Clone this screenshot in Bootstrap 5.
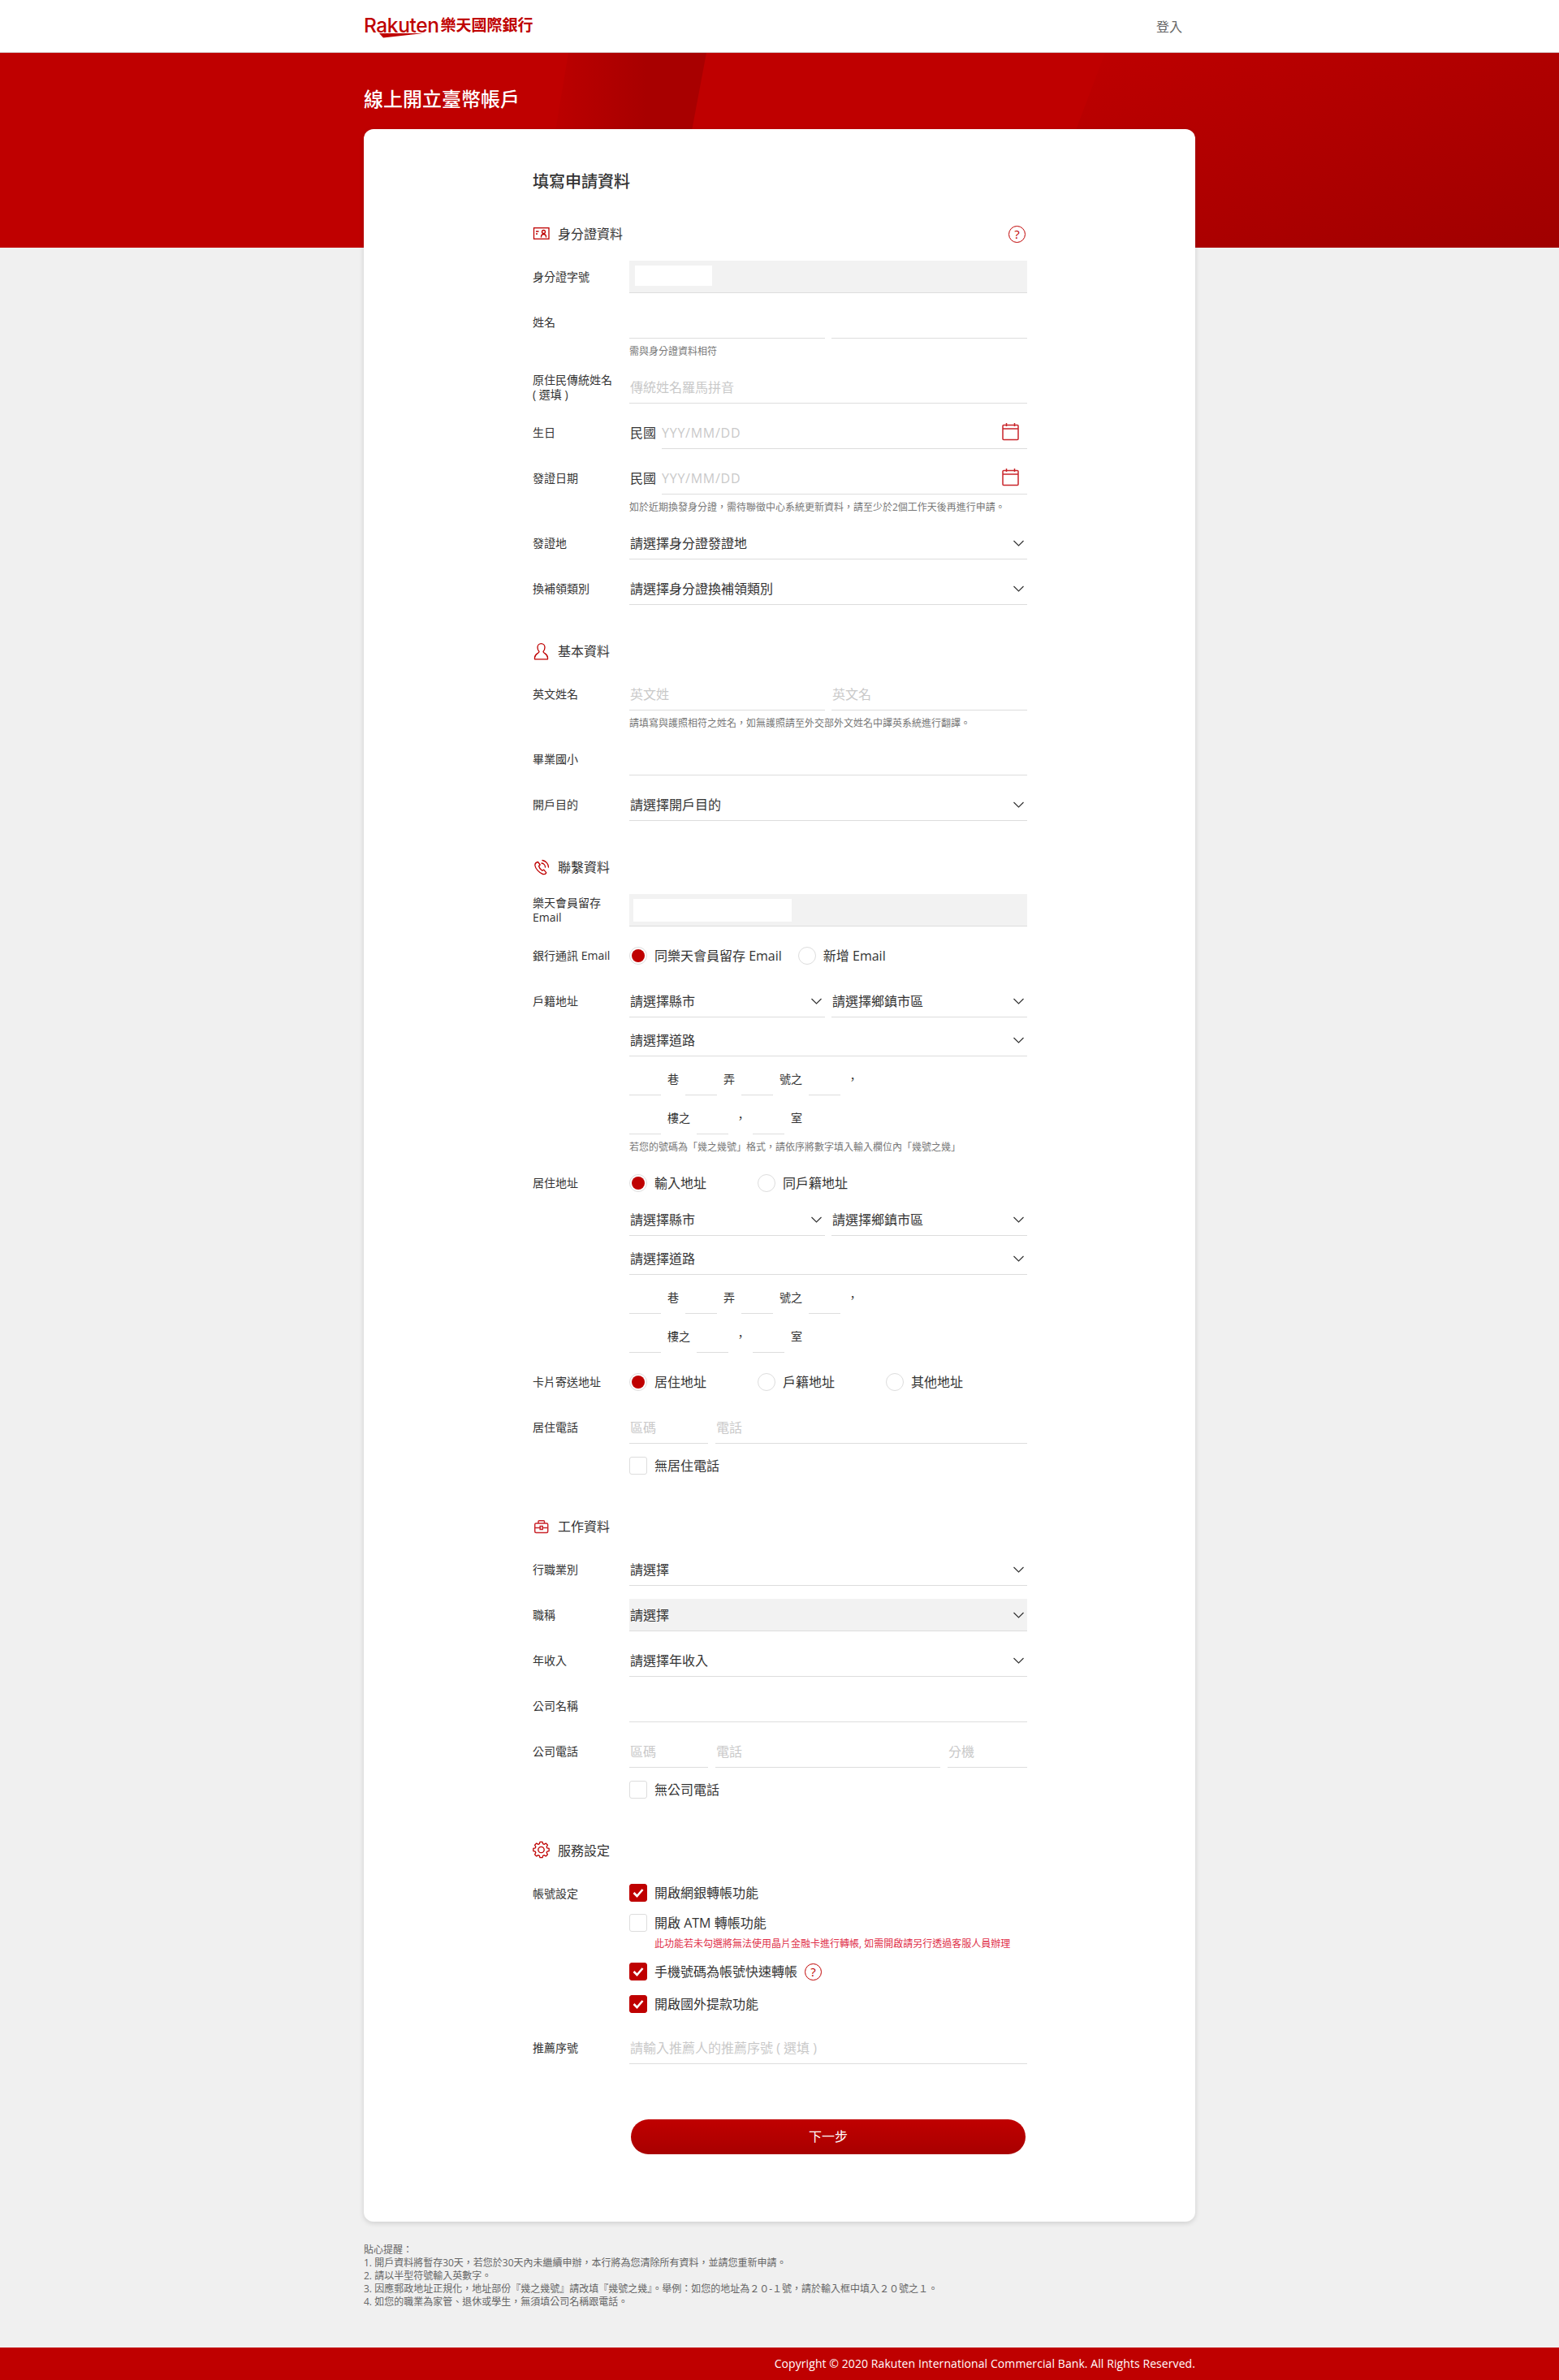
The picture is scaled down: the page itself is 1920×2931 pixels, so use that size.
<!DOCTYPE html>
<html lang="zh-Hant">
<head>
<meta charset="utf-8">
<title>線上開立臺幣帳戶</title>
<link href="https://cdn.jsdelivr.net/npm/bootstrap@5.3.0/dist/css/bootstrap.min.css" rel="stylesheet">
<style>
body{background:#f0f0f0;color:#333;font-family:"Open Sans","Noto Sans CJK TC",sans-serif;font-size:14px;line-height:18px;}
.top-bar{height:65px;background:#fff;border-bottom:1px solid #ddd;padding:0;}
.shell{width:1024px;}
.brand-name{font-family:Inter,sans-serif;font-size:24.5px;font-weight:500;letter-spacing:-.4px;color:#bf0000;line-height:24px;}
.brand-cjk{font-size:19px;font-weight:700;color:#bf0000;line-height:24px;margin-left:2px;}
.brand-wrap{position:relative;padding:0;margin:-2px 0 0;}
.brand-swoosh{position:absolute;left:19px;top:22px;}
.login-link{color:#666;font-size:16px;margin-right:16px;text-decoration:none;margin-top:1px;}
.hero{height:240px;background:#bf0000;overflow:hidden;}
.hero-art{position:absolute;inset:0;width:100%;height:100%;}
.hero-title{font-size:24px;line-height:30px;font-weight:500;color:#fff;padding-top:42px;margin:0;}
.sheet{margin-top:-146px;border-radius:12px;border:0;box-shadow:0 2px 6px rgba(0,0,0,.14);padding:50px 0 83px;}
.form-wrap{width:609px;margin-left:208px;}
.form-title{font-size:20px;line-height:30px;font-weight:500;color:#333;margin:0 0 37px;}
.sec-head{height:24px;margin:45px 0 21px;font-size:16px;line-height:24px;font-weight:400;color:#333;}
.sec-first{margin-top:0;}
.sec-head svg{margin-right:10px;flex:none;}
.frow{display:flex;margin-bottom:16px;}
.flabel{width:119px;flex:none;height:40px;display:flex;align-items:center;font-size:14px;line-height:18px;color:#333;}
.fbody{flex:1 1 auto;min-width:0;}
.form-control.line-in,.form-select.line-in{height:40px;min-height:40px;border:0;border-bottom:1px solid #ddd;border-radius:0;padding:0 0 0 1px;font-size:16px;line-height:24px;color:#333;background-color:transparent;box-shadow:none;}
.form-control.line-in::placeholder{color:#c9c9c9;opacity:1;}
.form-control.date-in::placeholder{letter-spacing:.75px;}
.form-select.line-in{padding-right:28px;background-image:url("data:image/svg+xml,%3csvg xmlns='http://www.w3.org/2000/svg' viewBox='0 0 13 8'%3e%3cpath fill='none' stroke='%23333' stroke-width='1.2' d='M.5 1l6 6 6-6'/%3e%3c/svg%3e");background-position:right 4px center;background-size:13px 8px;}
.form-select.line-in:disabled{background-color:#f2f2f2;color:#333;opacity:1;}
.ro-box{height:40px;background:#f2f2f2;border-bottom:1px solid #ddd;padding-top:6px;}
.mask-a{display:block;width:95px;height:25px;margin-left:7px;background:#fff;}
.mask-b{display:block;width:195px;height:28px;margin-left:5px;background:#fff;}
.help-text{font-size:12px;line-height:16px;color:#777;margin-top:8px;}
.warn-text{font-size:12px;line-height:16px;color:#e0304a;margin:7px 0 15px 31px;}
.pair{display:flex;gap:8px;}
.pair>*{flex:1 1 0;min-width:0;}
.tel-row{display:flex;gap:9px;}
.tel-a{width:97px;flex:none;}
.tel-x{width:98px;flex:none;}
.stack-gap{margin-top:8px;}
.live-sel{margin-top:5px;}
.addr-row{display:flex;gap:8px;align-items:center;height:40px;font-size:14px;}
.form-control.addr-in{width:39px;flex:none;}
.date-prefix{width:40px;flex:none;font-size:16px;padding-left:1px;}
.date-field{flex:1 1 auto;border-bottom:1px solid #ddd;height:40px;}
.form-control.line-in.date-in{border-bottom:0;padding-left:0;}
.date-field svg{flex:none;margin:7px 10px 0 0;}
.choice-row{display:flex;align-items:center;height:40px;font-size:16px;}
.choice{display:flex;align-items:center;gap:9px;margin:0;min-height:22px;padding:0;font-size:16px;line-height:22px;color:#333;}
.choice-col{width:158px;flex:none;}
.choice-free{margin-right:20px;}
.choice .form-check-input{width:22px;height:22px;margin:0;float:none;flex:none;border:1px solid #ddd;box-shadow:none;}
.choice .form-check-input[type=radio]:checked{background-color:#fff;border-color:#ddd;background-image:url("data:image/svg+xml,%3csvg xmlns='http://www.w3.org/2000/svg' viewBox='0 0 22 22'%3e%3ccircle cx='11' cy='11' r='8' fill='%23bf0000'/%3e%3c/svg%3e");background-size:22px 22px;}
.choice .form-check-input[type=checkbox]{border-radius:3px;}
.choice .form-check-input[type=checkbox]:checked{background-color:#bf0000;border-color:#bf0000;background-image:url("data:image/svg+xml,%3csvg xmlns='http://www.w3.org/2000/svg' viewBox='0 0 22 22'%3e%3cpath fill='none' stroke='%23fff' stroke-width='2.6' d='M5.5 11l4 4 7-8'/%3e%3c/svg%3e");background-size:22px 22px;}
.solo-check{margin-top:16px;margin-bottom:7px;}
.atm-line{margin-top:15px;}
.last-check{margin-top:18px;}
.svc-box{padding:8px 0 7px;}
.qmark{display:inline-flex;align-items:center;justify-content:center;width:21px;height:21px;border:1.5px solid #bf0000;border-radius:50%;color:#bf0000;font-size:15px;line-height:1;font-weight:500;flex:none;}
.qmark-head{margin-right:2px;}
.qmark-inline{margin-left:1px;}
.next-btn{display:block;width:486px;height:43px;margin:68px 0 0 121px;border:0;border-radius:22px;background:linear-gradient(#c00000,#a80000);color:#fff;font-size:16px;line-height:43px;padding:0;}
.note-block{margin:27px 0 48px;font-size:12px;line-height:16px;color:#666;}
.page-foot{height:40px;background:#bf0000;color:#fff;font-size:14px;line-height:40px;letter-spacing:.08px;}
</style>
</head>
<body>
<nav class="navbar top-bar">
  <div class="shell mx-auto d-flex justify-content-between align-items-center">
    <div class="navbar-brand brand-wrap d-flex align-items-center">
      <span class="brand-name">Rakuten</span><span class="brand-cjk">樂天國際銀行</span>
      <svg class="brand-swoosh" width="54" height="6" viewBox="0 0 54 6"><path d="M0 0h54L5 5.5z" fill="#bf0000"/></svg>
    </div>
    <a class="login-link" href="#">登入</a>
  </div>
</nav>

<div class="hero position-relative">
  <svg class="hero-art" viewBox="0 0 1920 240" preserveAspectRatio="none">
    <defs>
      <linearGradient id="wedgeA" x1="0" x2="1" y1="0" y2="0"><stop offset="0" stop-color="#bf0000"/><stop offset=".65" stop-color="#a80000"/><stop offset="1" stop-color="#a80000"/></linearGradient>
      <linearGradient id="wedgeB" x1="0" x2="1" y1="0" y2="1"><stop offset="0" stop-color="#bf0000"/><stop offset="1" stop-color="#a00000"/></linearGradient>
    </defs>
    <polygon points="700,0 870,0 825,240 660,240" fill="url(#wedgeA)"/>
    <polygon points="1361,0 1920,0 1920,240 1270,240" fill="url(#wedgeB)"/>
  </svg>
  <div class="shell mx-auto position-relative"><h1 class="hero-title">線上開立臺幣帳戶</h1></div>
</div>

<main class="shell mx-auto">
  <div class="card sheet">
    <form class="form-wrap">
      <h2 class="form-title">填寫申請資料</h2>

      <div class="sec-head sec-first d-flex align-items-center">
        <svg width="21" height="24" viewBox="0 0 21 24" fill="none" stroke="#bf0000" stroke-width="1.3"><rect x="1.5" y="4.7" width="18.5" height="13.5"/><path d="M4 9h3.5M4 12h2"/><circle cx="13.5" cy="9.5" r="2"/><path d="M10.5 16.5v-1a3 3 0 0 1 6 0v1"/></svg>
        <span>身分證資料</span>
        <span class="qmark qmark-head ms-auto">?</span>
      </div>

      <div class="frow"><div class="flabel">身分證字號</div><div class="fbody"><div class="ro-box"><span class="mask-a"></span></div></div></div>

      <div class="frow"><div class="flabel">姓名</div><div class="fbody">
        <div class="pair"><input class="form-control line-in" type="text"><input class="form-control line-in" type="text"></div>
        <div class="help-text">需與身分證資料相符</div>
      </div></div>

      <div class="frow"><div class="flabel">原住民傳統姓名<br>( 選填 )</div><div class="fbody"><input class="form-control line-in" type="text" placeholder="傳統姓名羅馬拼音"></div></div>

      <div class="frow"><div class="flabel">生日</div><div class="fbody"><div class="d-flex align-items-center">
        <span class="date-prefix">民國</span>
        <div class="date-field d-flex"><input class="form-control line-in date-in" type="text" placeholder="YYY/MM/DD">
          <svg width="21" height="23" viewBox="0 0 21 23" fill="none" stroke="#c9252b" stroke-width="1.5"><rect x="1" y="3.5" width="19" height="18" rx="1"/><path d="M1 8h19M5.5 1v4M15.5 1v4"/></svg></div>
      </div></div></div>

      <div class="frow"><div class="flabel">發證日期</div><div class="fbody"><div class="d-flex align-items-center">
        <span class="date-prefix">民國</span>
        <div class="date-field d-flex"><input class="form-control line-in date-in" type="text" placeholder="YYY/MM/DD">
          <svg width="21" height="23" viewBox="0 0 21 23" fill="none" stroke="#c9252b" stroke-width="1.5"><rect x="1" y="3.5" width="19" height="18" rx="1"/><path d="M1 8h19M5.5 1v4M15.5 1v4"/></svg></div>
      </div>
      <div class="help-text">如於近期換發身分證，需待聯徵中心系統更新資料，請至少於2個工作天後再進行申請。</div></div></div>

      <div class="frow"><div class="flabel">發證地</div><div class="fbody"><select class="form-select line-in"><option>請選擇身分證發證地</option></select></div></div>
      <div class="frow"><div class="flabel">換補領類別</div><div class="fbody"><select class="form-select line-in"><option>請選擇身分證換補領類別</option></select></div></div>

      <div class="sec-head d-flex align-items-center">
        <svg width="21" height="24" viewBox="0 0 21 24" fill="none" stroke="#bf0000" stroke-width="1.3" stroke-linejoin="round"><path d="M8 12.5C6.8 11.3 6 9.2 6 7.2a4.5 4.5 0 0 1 9 0c0 2-.8 4.1-2 5.3 0 2.3 5.5 2.3 5.5 7.5v1.8h-16V20C2.500 14.800 8 14.800 8 12.500z"/></svg>
        <span>基本資料</span>
      </div>

      <div class="frow"><div class="flabel">英文姓名</div><div class="fbody">
        <div class="pair"><input class="form-control line-in" type="text" placeholder="英文姓"><input class="form-control line-in" type="text" placeholder="英文名"></div>
        <div class="help-text">請填寫與護照相符之姓名，如無護照請至外交部外文姓名中譯英系統進行翻譯。</div>
      </div></div>
      <div class="frow"><div class="flabel">畢業國小</div><div class="fbody"><input class="form-control line-in" type="text"></div></div>
      <div class="frow"><div class="flabel">開戶目的</div><div class="fbody"><select class="form-select line-in"><option>請選擇開戶目的</option></select></div></div>

      <div class="sec-head d-flex align-items-center">
        <svg width="21" height="24" viewBox="0 0 21 24" fill="none" stroke="#bf0000" stroke-width="1.3" stroke-linejoin="round" stroke-linecap="round"><path d="M6.500 5.500C4.500 6 2.600 7.500 2.900 10c.4 3.500 5.600 9.500 9.600 10.500 2 .5 3.600-.5 4.300-1.700l-3-3.600-2 1c-1.800-1.200-3.800-3.700-4.300-5.700l1.700-1.500z"/><path d="M11 7a5 5 0 0 1 4.500 5M12 3.500a9 9 0 0 1 7.500 8.500"/></svg>
        <span>聯繫資料</span>
      </div>

      <div class="frow"><div class="flabel">樂天會員留存<br>Email</div><div class="fbody"><div class="ro-box"><span class="mask-b"></span></div></div></div>

      <div class="frow"><div class="flabel">銀行通訊 Email</div><div class="fbody"><div class="choice-row">
        <label class="form-check choice choice-free"><input class="form-check-input" type="radio" name="mailopt" checked>同樂天會員留存 Email</label>
        <label class="form-check choice"><input class="form-check-input" type="radio" name="mailopt">新增 Email</label>
      </div></div></div>

      <div class="frow"><div class="flabel">戶籍地址</div><div class="fbody">
        <div class="pair"><select class="form-select line-in"><option>請選擇縣市</option></select><select class="form-select line-in"><option>請選擇鄉鎮市區</option></select></div>
        <select class="form-select line-in stack-gap"><option>請選擇道路</option></select>
        <div class="addr-row stack-gap"><input class="form-control line-in addr-in" type="text"><span>巷</span><input class="form-control line-in addr-in" type="text"><span>弄</span><input class="form-control line-in addr-in" type="text"><span>號之</span><input class="form-control line-in addr-in" type="text"><span>，</span></div>
        <div class="addr-row stack-gap"><input class="form-control line-in addr-in" type="text"><span>樓之</span><input class="form-control line-in addr-in" type="text"><span>，</span><input class="form-control line-in addr-in" type="text"><span>室</span></div>
        <div class="help-text">若您的號碼為「幾之幾號」格式，請依序將數字填入輸入欄位內「幾號之幾」</div>
      </div></div>

      <div class="frow"><div class="flabel">居住地址</div><div class="fbody">
        <div class="choice-row">
          <label class="form-check choice choice-col"><input class="form-check-input" type="radio" name="liveopt" checked>輸入地址</label>
          <label class="form-check choice"><input class="form-check-input" type="radio" name="liveopt">同戶籍地址</label>
        </div>
        <div class="pair live-sel"><select class="form-select line-in"><option>請選擇縣市</option></select><select class="form-select line-in"><option>請選擇鄉鎮市區</option></select></div>
        <select class="form-select line-in stack-gap"><option>請選擇道路</option></select>
        <div class="addr-row stack-gap"><input class="form-control line-in addr-in" type="text"><span>巷</span><input class="form-control line-in addr-in" type="text"><span>弄</span><input class="form-control line-in addr-in" type="text"><span>號之</span><input class="form-control line-in addr-in" type="text"><span>，</span></div>
        <div class="addr-row stack-gap"><input class="form-control line-in addr-in" type="text"><span>樓之</span><input class="form-control line-in addr-in" type="text"><span>，</span><input class="form-control line-in addr-in" type="text"><span>室</span></div>
      </div></div>

      <div class="frow"><div class="flabel">卡片寄送地址</div><div class="fbody"><div class="choice-row">
        <label class="form-check choice choice-col"><input class="form-check-input" type="radio" name="cardopt" checked>居住地址</label>
        <label class="form-check choice choice-col"><input class="form-check-input" type="radio" name="cardopt">戶籍地址</label>
        <label class="form-check choice"><input class="form-check-input" type="radio" name="cardopt">其他地址</label>
      </div></div></div>

      <div class="frow"><div class="flabel">居住電話</div><div class="fbody">
        <div class="tel-row"><input class="form-control line-in tel-a" type="text" placeholder="區碼"><input class="form-control line-in flex-grow-1" type="text" placeholder="電話"></div>
        <label class="form-check choice solo-check"><input class="form-check-input" type="checkbox">無居住電話</label>
      </div></div>

      <div class="sec-head d-flex align-items-center">
        <svg width="21" height="24" viewBox="0 0 21 24" fill="none" stroke="#c9252b" stroke-width="1.5"><rect x="2.700" y="8" width="16" height="11.500" rx="1.500"/><path d="M7 8V5.700a1 1 0 0 1 1-1h5.500a1 1 0 0 1 1 1V8M2.700 13.500h16"/><rect x="9.200" y="11.500" width="3" height="4" fill="#fff"/></svg>
        <span>工作資料</span>
      </div>

      <div class="frow"><div class="flabel">行職業別</div><div class="fbody"><select class="form-select line-in"><option>請選擇</option></select></div></div>
      <div class="frow"><div class="flabel">職稱</div><div class="fbody"><select class="form-select line-in" disabled><option>請選擇</option></select></div></div>
      <div class="frow"><div class="flabel">年收入</div><div class="fbody"><select class="form-select line-in"><option>請選擇年收入</option></select></div></div>
      <div class="frow"><div class="flabel">公司名稱</div><div class="fbody"><input class="form-control line-in" type="text"></div></div>

      <div class="frow"><div class="flabel">公司電話</div><div class="fbody">
        <div class="tel-row"><input class="form-control line-in tel-a" type="text" placeholder="區碼"><input class="form-control line-in flex-grow-1" type="text" placeholder="電話"><input class="form-control line-in tel-x" type="text" placeholder="分機"></div>
        <label class="form-check choice solo-check"><input class="form-check-input" type="checkbox">無公司電話</label>
      </div></div>

      <div class="sec-head d-flex align-items-center">
        <svg width="21" height="24" viewBox="0 0 21 24" fill="none" stroke="#bf0000" stroke-width="1.300" stroke-linejoin="round"><g transform="translate(10.500,11)"><polygon points="7.30,-2.09 9.68,-1.53 9.68,1.53 7.30,2.09 6.64,3.68 7.93,5.76 5.76,7.93 3.68,6.64 2.09,7.30 1.53,9.68 -1.53,9.68 -2.09,7.30 -3.68,6.64 -5.76,7.93 -7.93,5.76 -6.64,3.68 -7.30,2.09 -9.68,1.53 -9.68,-1.53 -7.30,-2.09 -6.64,-3.68 -7.93,-5.76 -5.76,-7.93 -3.68,-6.64 -2.09,-7.30 -1.53,-9.68 1.53,-9.68 2.09,-7.30 3.68,-6.64 5.76,-7.93 7.93,-5.76 6.64,-3.68"/><circle r="3.700"/></g></svg>
        <span>服務設定</span>
      </div>

      <div class="frow"><div class="flabel">帳號設定</div><div class="fbody svc-box">
        <label class="form-check choice"><input class="form-check-input" type="checkbox" checked>開啟網銀轉帳功能</label>
        <label class="form-check choice atm-line"><input class="form-check-input" type="checkbox">開啟 ATM 轉帳功能</label>
        <div class="warn-text">此功能若未勾選將無法使用晶片金融卡進行轉帳, 如需開啟請另行透過客服人員辦理</div>
        <div class="d-flex align-items-center gap-2"><label class="form-check choice"><input class="form-check-input" type="checkbox" checked>手機號碼為帳號快速轉帳</label><span class="qmark qmark-inline">?</span></div>
        <label class="form-check choice last-check"><input class="form-check-input" type="checkbox" checked>開啟國外提款功能</label>
      </div></div>

      <div class="frow"><div class="flabel">推薦序號</div><div class="fbody"><input class="form-control line-in" type="text" placeholder="請輸入推薦人的推薦序號 ( 選填 )"></div></div>

      <button type="button" class="btn next-btn">下一步</button>
    </form>
  </div>
  <div class="note-block">
    貼心提醒：<br>
    1. 開戶資料將暫存30天，若您於30天內未繼續申辦，本行將為您清除所有資料，並請您重新申請。<br>
    2. 請以半型符號輸入英數字。<br>
    3. 因應郵政地址正規化，地址部份『幾之幾號』請改填『幾號之幾』。舉例：如您的地址為２０-１號，請於輸入框中填入２０號之１。<br>
    4. 如您的職業為家管、退休或學生，無須填公司名稱跟電話。
  </div>
</main>

<footer class="page-foot"><div class="shell mx-auto text-end">Copyright © 2020 Rakuten International Commercial Bank. All Rights Reserved.</div></footer>
<script src="https://cdn.jsdelivr.net/npm/bootstrap@5.3.0/dist/js/bootstrap.bundle.min.js"></script>
</body>
</html>
